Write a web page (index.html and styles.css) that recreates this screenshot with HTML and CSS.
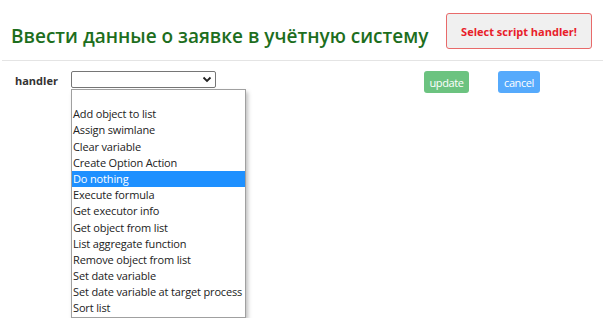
FILE: index.html
```html
<!DOCTYPE html>
<html lang="ru">
<head>
    <meta charset="UTF-8">
    <meta name="viewport" content="width=device-width, initial-scale=1.0">
    <title>Ввести данные о заявке</title>
    <link rel="stylesheet" href="styles.css">
</head>
<body>
    <header class="top">
        <h1 class="title">Ввести данные о заявке в учётную систему</h1>
        <div class="alert">Select script handler!</div>
    </header>
    <hr class="divider">
    <div class="form-row">
        <span class="field-label">handler</span>
        <div class="select-wrap">
            <div class="select">
                <svg class="chevron" width="10" height="7" viewBox="0 0 10 7">
                    <path d="M1.5 1.5 L5 5 L8.5 1.5" fill="none" stroke="#222" stroke-width="1.8"/>
                </svg>
            </div>
            <div class="options">
                <div class="option">&nbsp;</div>
                <div class="option">Add object to list</div>
                <div class="option">Assign swimlane</div>
                <div class="option">Clear variable</div>
                <div class="option">Create Option Action</div>
                <div class="option active">Do nothing</div>
                <div class="option">Execute formula</div>
                <div class="option">Get executor info</div>
                <div class="option">Get object from list</div>
                <div class="option">List aggregate function</div>
                <div class="option">Remove object from list</div>
                <div class="option">Set date variable</div>
                <div class="option">Set date variable at target process</div>
                <div class="option">Sort list</div>
            </div>
        </div>
        <div class="actions">
            <button class="btn btn-update">update</button>
            <button class="btn btn-cancel">cancel</button>
        </div>
    </div>
</body>
</html>
```

FILE: styles.css
```css
/* base */
body, html {
    margin: 0;
    padding: 0;
    font-family: "Open Sans", Arial, sans-serif;
    background: #fff;
}

/* header */
.top {
    display: flex;
    justify-content: space-between;
    align-items: flex-start;
    padding: 13px 12px 0 11px;
    height: 47px;
}

.title {
    margin: 9px 0 0 0;
    font-size: 19px;
    font-weight: 600;
    color: #1d6e1d;
    line-height: 28px;
    white-space: nowrap;
}

.alert {
    flex-shrink: 0;
    width: 144px;
    height: 34px;
    border: 1px solid #e86a6a;
    border-radius: 3px;
    background: #f0f0f0;
    color: #e8202a;
    font-size: 11px;
    font-weight: 700;
    display: flex;
    align-items: center;
    justify-content: center;
}

.divider {
    margin: 0 1px 0 2px;
    border: 0;
    border-top: 1px solid #e4e4e4;
}

/* form row */
.form-row {
    display: flex;
    align-items: flex-start;
    padding-top: 10px;
}

.field-label {
    width: 56px;
    margin-left: 15px;
    font-size: 11px;
    font-weight: 700;
    color: #333;
    line-height: 19px;
}

.select-wrap {
    width: 175px;
    display: flex;
    flex-direction: column;
}

.select {
    box-sizing: border-box;
    width: 145px;
    height: 17px;
    border: 1px solid #767676;
    border-radius: 2px;
    background: #fff;
    display: flex;
    align-items: center;
    justify-content: flex-end;
    padding-right: 3px;
}

.options {
    margin-top: 1px;
    background: #fff;
    border: 1px solid #a0a0a0;
    box-shadow: 2px 3px 4px rgba(0, 0, 0, 0.25);
    font-size: 11px;
    letter-spacing: -0.15px;
    color: #222;
}

.option {
    height: 16.2px;
    line-height: 16px;
    padding-left: 1px;
    white-space: nowrap;
}

.option.active {
    background: #1e90ff;
    color: #fff;
}

.actions {
    display: flex;
    gap: 29px;
    margin-left: 178px;
}

.btn {
    height: 22px;
    border: 0;
    border-radius: 3px;
    color: #fff;
    font-family: "Open Sans", Arial, sans-serif;
    font-size: 11px;
    padding: 0;
    letter-spacing: -0.4px;
}

.btn-update {
    width: 45px;
    background: #6cc380;
}

.btn-cancel {
    width: 42px;
    background: #56aafc;
}
```
